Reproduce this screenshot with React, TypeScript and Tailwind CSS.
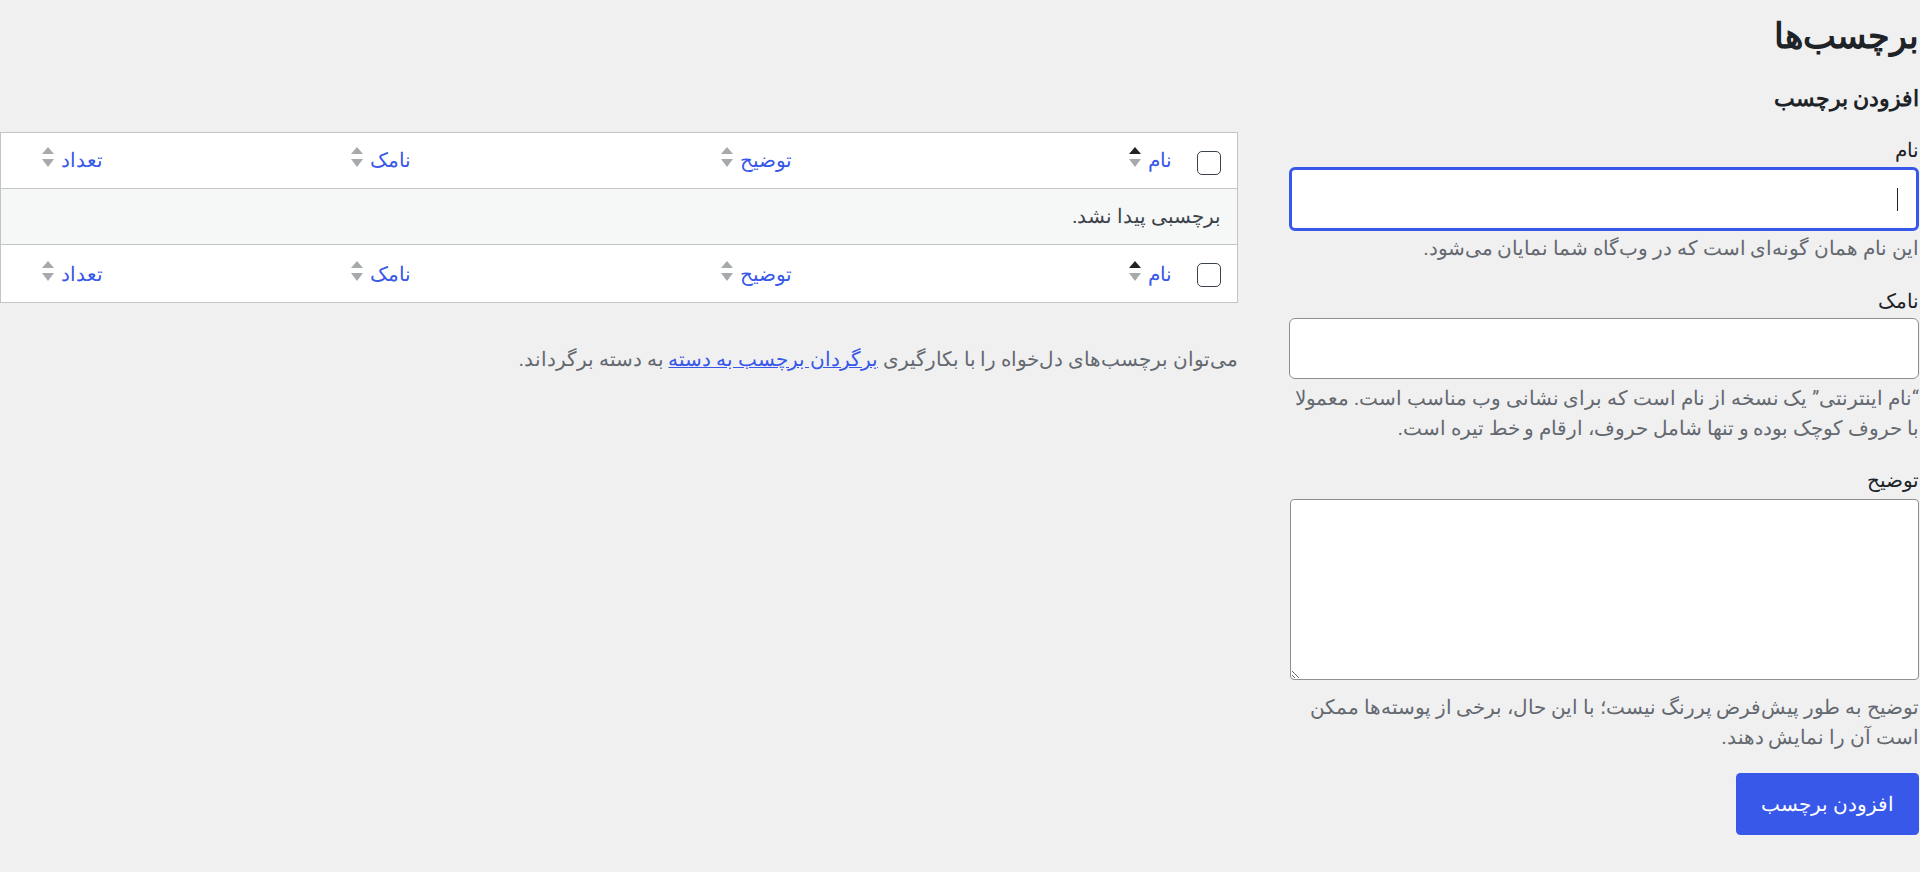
import React from "react";

const Z = "\u200c";

function SortArrows({ active }: { active?: boolean }) {
  return (
    <svg width="12" height="21" viewBox="0 0 12 21" className="shrink-0 mb-[6px]">
      <path d="M0 7 L6 0 L12 7 Z" fill={active ? "#1d2327" : "#a7aaad"} />
      <path d="M0 12 L12 12 L6 20 Z" fill="#a7aaad" />
    </svg>
  );
}

function SortHead({ label, active }: { label: string; active?: boolean }) {
  return (
    <th className="pr-[18px] pt-[1px] font-normal text-right align-middle">
      <a href="#" className="inline-flex items-center gap-[7px] text-[#3858e9] no-underline">
        <span>{label}</span>
        <SortArrows active={active} />
      </a>
    </th>
  );
}

function HeadRow({ tall }: { tall?: boolean }) {
  return (
    <tr className={tall ? "h-[57.5px]" : "h-[55.6px]"}>
      <td className="align-top pt-[18px] pr-[4.5px]">
        <input
          type="checkbox"
          aria-label="انتخاب همه"
          className="appearance-none block w-[24px] h-[24px] mr-[12px] border-[1.5px] border-[#3c434a] rounded-[5px] bg-white"
        />
      </td>
      <SortHead label="نام" active />
      <SortHead label="توضیح" />
      <SortHead label="نامک" />
      <SortHead label="تعداد" />
    </tr>
  );
}

export default function App() {
  return (
    <div className="w-[1920px] h-[872px] overflow-hidden bg-[#f0f0f1] font-[Roboto,sans-serif] text-[19.5px] leading-[1.5] text-[#3c434a]">
      <div dir="rtl" className="w-[1919px]">
        <h1 className="pt-[14px] text-[34.5px] leading-[45px] font-semibold text-[#1d2327]">
          {`برچسب${Z}ها`}
        </h1>
        <div className="flex items-start gap-[51px]">
          {/* Form column */}
          <div className="w-[630px] shrink-0 pt-[25px]">
            <h2 className="text-[21.5px] leading-[29px] font-semibold text-[#1d2327]">افزودن برچسب</h2>
            <form className="mt-[25px]" onSubmit={(e) => e.preventDefault()}>
              <label className="block leading-[26px] pb-[3px] text-[#1d2327]">نام</label>
              <div className="relative w-[630px] -ml-[1px]">
                <input
                  type="text"
                  aria-label="نام"
                  className="block w-full h-[64px] bg-white border-[3px] border-[#3858e9] rounded-[6px] outline-none"
                />
                <span className="absolute right-[21px] top-[21px] w-[1.5px] h-[23px] bg-[#1d2327]" />
              </div>
              <p className="mt-[3px] text-[#646970]">
                {`این نام همان گونه${Z}ای است که در وب${Z}گاه شما نمایان می${Z}شود.`}
              </p>

              <label className="block mt-[26px] leading-[25px] pb-[4px] text-[#1d2327]">نامک</label>
              <input
                type="text"
                aria-label="نامک"
                className="block w-[630px] h-[61px] bg-white border-[1.5px] border-[#8c8f94] rounded-[6px] outline-none"
              />
              <p className="mt-[5px] text-[#646970]">
                “نام اینترنتی” یک نسخه از نام است که برای نشانی وب مناسب است. معمولا با حروف کوچک بوده و تنها شامل حروف، ارقام و خط تیره است.
              </p>

              <label className="block mt-[26.5px] leading-[24px] pb-[6px] text-[#1d2327]">توضیح</label>
              <textarea
                aria-label="توضیح"
                className="block w-[629px] h-[181px] bg-white border-[1.5px] border-[#8c8f94] rounded-[4px] outline-none"
              />
              <p className="mt-[13px] text-[#646970]">
                {`توضیح به طور پیش${Z}فرض پررنگ نیست؛ با این حال، برخی از پوسته${Z}ها ممکن است آن را نمایش دهند.`}
              </p>

              <button
                type="submit"
                className="block mt-[21.5px] w-[183px] h-[62px] bg-[#3858e9] text-white rounded-[4.5px]"
              >
                افزودن برچسب
              </button>
            </form>
          </div>

          {/* Table column */}
          <div className="w-[1238px] shrink-0 mt-[73px]">
            <table className="w-full table-fixed border-collapse bg-white border border-[#c3c4c7]">
              <colgroup>
                <col className="w-[47.5px]" />
                <col className="w-[379px]" />
                <col className="w-[381px]" />
                <col className="w-[307px]" />
                <col className="w-[120.5px]" />
              </colgroup>
              <thead className="border-b border-[#c3c4c7]">
                <HeadRow />
              </thead>
              <tbody>
                <tr className="h-[56.8px] bg-[#f6f7f7]">
                  <td colSpan={5} className="pr-[16px] text-right">برچسبی پیدا نشد.</td>
                </tr>
              </tbody>
              <tfoot className="border-t border-[#c3c4c7]">
                <HeadRow tall />
              </tfoot>
            </table>
            <p className="mt-[42px] text-[#646970]">
              {`می${Z}توان برچسب${Z}های دل${Z}خواه را با بکارگیری `}
              <a href="#" className="text-[#3858e9] underline">برگردان برچسب به دسته</a>
              {" به دسته برگرداند."}
            </p>
          </div>
        </div>
      </div>
    </div>
  );
}
